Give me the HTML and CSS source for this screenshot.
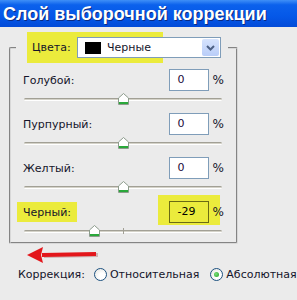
FILE: index.html
```html
<!DOCTYPE html>
<html lang="ru">

<head>
    <meta charset="UTF-8">
    <title>Слой выборочной коррекции</title>
    <link rel="stylesheet" href="styles.css">
</head>

<body>

    <div class="titlebar">Слой выборочной коррекции</div>

    <div class="dialog">

        <fieldset class="group">
            <legend class="colors">
                <span class="mark"></span>
                <span class="colors-label">Цвета:</span>
                <div class="select">
                    <span class="swatch"></span>
                    <span class="select-text">Черные</span>
                    <span class="select-btn">
                        <svg width="9" height="6" viewBox="0 0 9 6">
                            <path d="M1 1 L4.5 4.5 L8 1" fill="none" stroke="#4d6185" stroke-width="2"/>
                        </svg>
                    </span>
                </div>
            </legend>

            <div class="group-body">

                <div class="row">
                    <div class="row-head">
                        <span class="label">Голубой:</span>
                        <span class="value"><span class="input">0</span><span class="pct">%</span></span>
                    </div>
                    <div class="slider">
                        <div class="track"></div>
                        <svg class="thumb" style="left: 50%" width="11" height="12" viewBox="0 0 11 12">
                            <path d="M0.5 5 L5.5 0.5 L10.5 5 L10.5 11.5 L0.5 11.5 Z" fill="#fff" stroke="#8c9c8c"/>
                            <rect x="1" y="9" width="9" height="2" fill="#2aa83a"/>
                        </svg>
                    </div>
                </div>

                <div class="row">
                    <div class="row-head">
                        <span class="label">Пурпурный:</span>
                        <span class="value"><span class="input">0</span><span class="pct">%</span></span>
                    </div>
                    <div class="slider">
                        <div class="track"></div>
                        <svg class="thumb" style="left: 50%" width="11" height="12" viewBox="0 0 11 12">
                            <path d="M0.5 5 L5.5 0.5 L10.5 5 L10.5 11.5 L0.5 11.5 Z" fill="#fff" stroke="#8c9c8c"/>
                            <rect x="1" y="9" width="9" height="2" fill="#2aa83a"/>
                        </svg>
                    </div>
                </div>

                <div class="row">
                    <div class="row-head">
                        <span class="label">Желтый:</span>
                        <span class="value"><span class="input">0</span><span class="pct">%</span></span>
                    </div>
                    <div class="slider">
                        <div class="track"></div>
                        <svg class="thumb" style="left: 50%" width="11" height="12" viewBox="0 0 11 12">
                            <path d="M0.5 5 L5.5 0.5 L10.5 5 L10.5 11.5 L0.5 11.5 Z" fill="#fff" stroke="#8c9c8c"/>
                            <rect x="1" y="9" width="9" height="2" fill="#2aa83a"/>
                        </svg>
                    </div>
                </div>

                <div class="row">
                    <div class="row-head">
                        <span class="label label-marked">Черный:</span>
                        <span class="value"><span class="input-mark"><span class="input input-dark">-29</span></span><span class="pct pct-over">%</span></span>
                    </div>
                    <div class="slider">
                        <div class="track"></div>
                        <span class="tick"></span>
                        <svg class="thumb" style="left: 35.5%" width="11" height="12" viewBox="0 0 11 12">
                            <path d="M0.5 5 L5.5 0.5 L10.5 5 L10.5 11.5 L0.5 11.5 Z" fill="#fff" stroke="#8c9c8c"/>
                            <rect x="1" y="9" width="9" height="2" fill="#2aa83a"/>
                        </svg>
                    </div>
                </div>

            </div>
        </fieldset>

        <svg class="arrow" width="74" height="18" viewBox="0 0 74 18">
            <path d="M17 7 L71 6 L71 10 L17 11 Z" fill="#7a1010" opacity="0.25" transform="translate(1 1)"/>
            <path d="M16 7 L70 6 L70 10 L16 11 Z" fill="#e3161b"/>
            <path d="M1 9 L17 1 L15 9 L17 17 Z" fill="#e3161b"/>
        </svg>

        <div class="mode">
            <span class="mode-label">Коррекция:</span>
            <span class="radio"></span>
            <span class="radio-text">Относительная</span>
            <span class="radio radio-on"></span>
            <span class="radio-text">Абсолютная</span>
        </div>

    </div>

</body>

</html>
```

FILE: styles.css
```css
body {
    margin: 0;
    width: 297px;
    height: 300px;
    background-color: #ebebeb;
    font-family: "DejaVu Sans", Tahoma, sans-serif;
    font-size: 11px;
    color: #14142a;
    overflow: hidden;
}

.titlebar {
    height: 27px;
    line-height: 28px;
    padding-left: 3px;
    background: linear-gradient(#3f8ff7 0%, #0b61ec 18%, #0558e8 60%, #034bd8 100%);
    color: #fff;
    font-family: "Liberation Sans", Arial, sans-serif;
    font-weight: bold;
    font-size: 18px;
    text-shadow: 1px 1px 0 #0c2a80;
    white-space: nowrap;
}

.dialog {
    padding: 5px 0 0 9px;
}

.group {
    width: 229px;
    min-width: 0;
    box-sizing: border-box;
    margin: 0;
    padding: 0;
    border: 2px groove #d8d8d8;
    border-radius: 2px;
}

.group-body {
    padding: 0 14px 5px 12px;
}

.colors {
    position: relative;
    display: flex;
    align-items: center;
    height: 31px;
    margin-left: 5px;
    padding: 0 7px 0 11px;
}

/* жёлтая подсветка */
.mark {
    position: absolute;
    left: 11px;
    top: 0;
    width: 136px;
    height: 31px;
    background-color: #ebeb3c;
}

.colors-label {
    position: relative;
    box-sizing: border-box;
    width: 50px;
    padding-left: 5px;
}

.select {
    position: relative;
    display: flex;
    align-items: center;
    width: 144px;
    height: 21px;
    box-sizing: border-box;
    border: 1px solid #7f9db9;
    background-color: #fff;
}

.swatch {
    width: 16px;
    height: 12px;
    margin-left: 7px;
    background-color: #000;
}

.select-text {
    margin-left: 6px;
    flex-grow: 1;
}

.select-btn {
    display: flex;
    align-items: center;
    justify-content: center;
    width: 17px;
    height: 17px;
    margin-right: 1px;
    border-radius: 2px;
    background: linear-gradient(#d6e3fd, #b9cdf8);
}

.row {
    margin-top: 6px;
}

.row + .row {
    margin-top: 8px;
}

.row-head {
    display: flex;
    align-items: center;
    justify-content: space-between;
    height: 22px;
}

.value {
    display: flex;
    align-items: center;
}

.input {
    display: block;
    width: 40px;
    height: 22px;
    line-height: 20px;
    box-sizing: border-box;
    padding-left: 8px;
    border: 1px solid #7f9db9;
    background-color: #fff;
    color: #1b0a3a;
}

.input-dark {
    border-color: #6b6b14;
    background-color: #ebeb3c;
    color: #000;
}

.input-mark {
    display: block;
    padding: 6px 11px 2px 11px;
    margin: -6px -11px -2px -11px;
    background-color: #ebeb3c;
}

.pct {
    margin-left: 4px;
    margin-right: -2px;
    font-size: 12px;
}

.pct-over {
    position: relative;
}

.label-marked {
    padding: 4px 6px 3px 6px;
    margin: -4px -6px -3px -6px;
    background-color: #ebeb3c;
}

.slider {
    position: relative;
    height: 14px;
    margin-left: 1px;
}

.track {
    position: absolute;
    left: 0;
    right: 0;
    top: 7px;
    height: 1px;
    border-top: 1px solid #a2a095;
    border-bottom: 1px solid #fff;
    background-color: #d4d2c8;
    border-radius: 2px;
}

.tick {
    position: absolute;
    left: 50%;
    top: 5px;
    width: 1px;
    height: 6px;
    background-color: #a2a095;
}

.thumb {
    position: absolute;
    top: 2px;
    margin-left: -5px;
}

.arrow {
    display: block;
    margin: 2px 0 0 17px;
}

.mode {
    display: flex;
    align-items: center;
    height: 14px;
    margin-top: 3px;
    padding-left: 9px;
}

.radio {
    position: relative;
    width: 13px;
    height: 13px;
    box-sizing: border-box;
    margin: 0 3px 0 9px;
    border: 1px solid #1c5180;
    border-radius: 50%;
    background: radial-gradient(circle at 65% 65%, #fff 30%, #e2e2dc 100%);
}

.radio + .radio-text + .radio {
    margin-left: 11px;
}

.radio-on::after {
    content: "";
    position: absolute;
    left: 3px;
    top: 3px;
    width: 5px;
    height: 5px;
    border-radius: 50%;
    background: radial-gradient(circle at 40% 40%, #7de07d, #21a121);
}
```
